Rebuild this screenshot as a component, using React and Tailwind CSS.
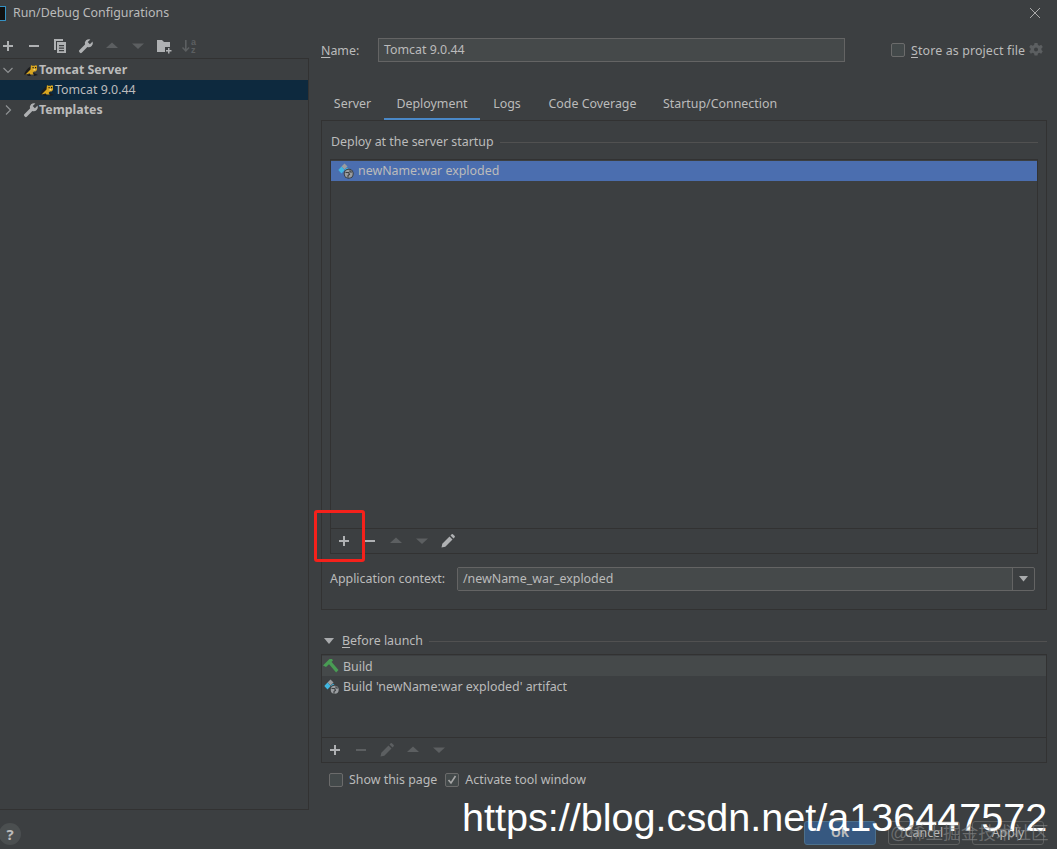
import React from "react";

function Plus({ c = "#afb1b3" }) {
  return (
    <svg width="16" height="16" viewBox="0 0 16 16"><path d="M7 3h2v4h4v2H9v4H7V9H3V7h4z" fill={c} /></svg>
  );
}
function Minus({ c = "#afb1b3" }) {
  return (
    <svg width="16" height="16" viewBox="0 0 16 16"><path d="M3 7h10v2H3z" fill={c} /></svg>
  );
}
function Up({ c = "#5c5f61" }) {
  return (
    <svg width="16" height="16" viewBox="0 0 16 16"><path d="M8 4.500l6 5.500H2z" fill={c} /></svg>
  );
}
function Down({ c = "#5c5f61" }) {
  return (
    <svg width="16" height="16" viewBox="0 0 16 16"><path d="M2 5.500h12L8 11z" fill={c} /></svg>
  );
}
function Pencil({ c = "#afb1b3" }) {
  return (
    <svg width="16" height="16" viewBox="0 0 16 16"><path d="M1.500 14.500l.8-3.800 7.200-7.200 3 3-7.200 7.200zM10.500 2.500l1.200-1.200a.9.9 0 0 1 1.200 0l1.800 1.800a.9.9 0 0 1 0 1.200l-1.200 1.200z" fill={c} /></svg>
  );
}
function Wrench({ c = "#afb1b3" }) {
  return (
    <svg width="16" height="16" viewBox="0 0 16 16"><path d="M14.600 3.600l-2.700 2.700-2.200-2.200L12.400 1.400A4.200 4.200 0 0 0 7 6.600L1.300 12.300a1.200 1.200 0 0 0 0 1.700l.7.7a1.200 1.200 0 0 0 1.700 0L9.400 9a4.200 4.200 0 0 0 5.200-5.400z" fill={c} /></svg>
  );
}
function Copy() {
  return (
    <svg width="16" height="16" viewBox="0 0 16 16">
      <path d="M2 1h9v2H4v9H2z" fill="#afb1b3" />
      <path d="M5 4h9v11H5zM7 7v1.200h5V7zm0 2.600v1.200h5V9.600zm0 2.500v1.200h5v-1.200z" fill="#afb1b3" fillRule="evenodd" />
    </svg>
  );
}
function FolderPlus() {
  return (
    <svg width="16" height="16" viewBox="0 0 16 16">
      <path d="M1 2h5l2 2h6v5H9v5H1z" fill="#afb1b3" />
      <path d="M12 10h1.500v2H15.500v1.500h-2V15.500H12v-2h-2V12h2z" fill="#afb1b3" />
    </svg>
  );
}
function SortAz() {
  return (
    <svg width="16" height="18" viewBox="0 0 16 18">
      <path d="M3 3h1.600v9l2-2 1 1L3.800 15 0 11l1-1 2 2z" fill="#5c5f61" />
      <text x="9" y="7.500" fontSize="9" fontWeight="700" fontFamily="Liberation Sans, sans-serif" fill="#5c5f61">a</text>
      <text x="9" y="16" fontSize="9" fontWeight="700" fontFamily="Liberation Sans, sans-serif" fill="#5c5f61">z</text>
    </svg>
  );
}
function Tomcat() {
  return (
    <svg width="14" height="12" viewBox="0 0 14 12">
      <path d="M0 10.500C1 7.500 3.500 4 6.500 2.500l.5 3.500-3 4.500z" fill="#1c1d1e" />
      <path d="M7 1l1 .8h3l1-.8 1 1V6l-1.500 1.500H10L8.500 9l2.500 1.500H6.500L5.500 9.500 1.500 10.500 4.500 7.500 6.500 5.500z" fill="#d9a61f" />
      <path d="M8.500 3h1.200v1.200H8.500zM11 3h1.200v1.200H11z" fill="#1c1d1e" />
      <path d="M9 8.500l5 2.500-4 1zM3 12l2.500-2.500L7 12z" fill="#1c1d1e" />
      <path d="M9.500 5.200h1.800v1.100H9.500z" fill="#f3e3a8" />
    </svg>
  );
}
function Artifact() {
  return (
    <svg width="16" height="16" viewBox="0 0 16 16">
      <path d="M6.500 0.500l3 3-3 3-3-3z" fill="#9a9da0" />
      <path d="M3.500 3.500l3.200 3.500-3.200 3.500L0.300 7z" fill="#40b6e0" />
      <path d="M9 4.500l2.500 2.500L9 9 6.800 7z" fill="#40b6e0" />
      <circle cx="10.700" cy="10.800" r="5" fill="#3c3f41" />
      <circle cx="10.700" cy="10.800" r="4" fill="#9a9da0" />
      <path d="M7.500 9.500h3l1 1.800-1.500 1.200v2.300M12 7.300v1.700h2" fill="none" stroke="#3c3f41" strokeWidth="1.100" />
    </svg>
  );
}
function Hammer() {
  return (
    <svg width="16" height="16" viewBox="0 0 16 16">
      <path d="M0 7.500L6.500 1H9L10 2.500 3 9z" fill="#499c54" />
      <path d="M5.500 5.500L7.800 3l7.700 9-2.400 2.500z" fill="#499c54" />
    </svg>
  );
}
function Gear() {
  return (
    <svg width="16" height="16" viewBox="0 0 16 16">
      <path d="M6.500 1h3l.4 2 1.500.7 1.800-1 1.600 2.400-1.400 1.300v1.600l1.400 1.300-1.600 2.400-1.800-1-1.500.7-.4 2h-3l-.4-2-1.500-.7-1.800 1L1.200 9.300l1.400-1.300V6.400L1.200 5.100l1.600-2.400 1.800 1 1.500-.7zM8 5.500a2 2 0 1 0 0 4 2 2 0 0 0 0-4z" fill="#5c5f61" fillRule="evenodd" />
    </svg>
  );
}
function CheckBox({ checked }) {
  return (
    <span className="flex h-[14px] w-[14px] items-center justify-center rounded-[2px] border border-[#6b6b6b] bg-[#43494a]">
      {checked && (
        <svg width="12" height="12" viewBox="0 0 12 12"><path d="M2.500 6l2.500 3 4.500-7" fill="none" stroke="#a7a7a7" strokeWidth="1.600" /></svg>
      )}
    </span>
  );
}
function ToolBtn({ children, w = "w-[26px]" }) {
  return <span className={`flex h-full ${w} shrink-0 items-center justify-center`}>{children}</span>;
}
function TreeRow({ selected, indent, chevron, icon, bold, children }) {
  return (
    <div className={`flex h-[20px] items-center ${selected ? "bg-[#0d293e]" : ""}`}>
      <span className={`flex ${indent} shrink-0 justify-start pl-[3px]`}>{chevron}</span>
      <span className="flex w-[17px] shrink-0 justify-center">{icon}</span>
      <span className={bold ? "font-bold" : ""}>{children}</span>
    </div>
  );
}
function ChexLabel({ checked, label }) {
  return (
    <span className="flex items-center">
      <CheckBox checked={checked} />
      <span className="ml-[6px]">{label}</span>
    </span>
  );
}

export default function App() {
  return (
    <div className="relative flex h-[849px] w-[1057px] flex-col overflow-hidden bg-[#3c3f41] font-['Noto_Sans','Open_Sans',sans-serif] text-[12.400px] leading-[20px] text-[#bbbbbb]">
      <div className="flex h-[26px] shrink-0 items-center">
        <span className="mr-[7px] block h-[15px] w-[6px] rounded-r-[1px] border-y border-r border-[#3592c4] bg-[#111111]" />
        <span>Run/Debug Configurations</span>
        <svg className="ml-auto mr-[16px]" width="12" height="12" viewBox="0 0 12 12"><path d="M1 1l10 10M11 1L1 11" stroke="#a9a9a9" strokeWidth="1" /></svg>
      </div>

      <div className="flex min-h-0 flex-1">
        <div className="flex w-[309px] shrink-0 flex-col">
          <div className="flex h-[32px] shrink-0 items-center pt-[8px]">
            <ToolBtn w="w-[21px]"><span className="-ml-[5px] flex"><Plus /></span></ToolBtn>
            <ToolBtn><Minus /></ToolBtn>
            <ToolBtn><Copy /></ToolBtn>
            <ToolBtn><Wrench /></ToolBtn>
            <ToolBtn><Up /></ToolBtn>
            <ToolBtn><Down /></ToolBtn>
            <ToolBtn><FolderPlus /></ToolBtn>
            <ToolBtn><SortAz /></ToolBtn>
          </div>
          <div className="h-[751px] shrink-0 border-t border-r border-[#323232] pt-[1px]">
            <TreeRow indent="w-[22px]" icon={<Tomcat />} bold chevron={
              <svg width="10" height="10" viewBox="0 0 10 10"><path d="M.500 3l4.500 4.500L9.500 3" fill="none" stroke="#8f9294" strokeWidth="1.200" /></svg>
            }>Tomcat Server</TreeRow>
            <TreeRow selected indent="w-[38px]" icon={<Tomcat />}>Tomcat 9.0.44</TreeRow>
            <TreeRow indent="w-[22px]" icon={<Wrench />} bold chevron={
              <svg width="10" height="10" viewBox="0 0 10 10"><path d="M3 .500L7.500 5 3 9.500" fill="none" stroke="#8f9294" strokeWidth="1.200" /></svg>
            }>Templates</TreeRow>
          </div>
          <div className="flex flex-1 items-start border-t border-[#323232] pt-[13px]">
            <span className="-ml-[1px] flex h-[22px] w-[22px] items-center justify-center rounded-full bg-[#4b4f50] text-[15px] font-bold">?</span>
          </div>
        </div>

        <div className="flex min-w-0 flex-1 flex-col pl-[12px] pr-[10px] pt-[12px]">
          <div className="flex h-[24px] shrink-0 items-center">
            <span className="w-[57px] shrink-0 pt-[1px]"><span className="underline underline-offset-2">N</span>ame:</span>
            <div className="flex h-[24px] w-[467px] shrink-0 items-center border border-[#646464] bg-[#45494a] px-[5px]">Tomcat 9.0.44</div>
            <span className="ml-[46px] mr-[6px] flex"><CheckBox /></span>
            <span className="pt-[1px] tracking-[0.130px]"><span className="underline underline-offset-2">S</span>tore as project file</span>
            <span className="ml-[3px] flex"><Gear /></span>
          </div>

          <div className="mt-[33px] flex h-[26px] shrink-0 items-start">
            {[
              ["Server", "w-[63px]", false],
              ["Deployment", "w-[96px]", true],
              ["Logs", "w-[54px]", false],
              ["Code Coverage", "w-[117px]", false],
              ["Startup/Connection", "w-[138px]", false],
            ].map(([t, w, a]) => (
              <div key={t} className={`flex h-[26px] ${w} shrink-0 justify-center leading-[18px] ${a ? "border-b-[3px] border-[#4a88c7]" : ""}`}>{t}</div>
            ))}
          </div>

          <div className="-mt-[1px] flex h-[490px] shrink-0 flex-col border border-[#323232] px-[8px] pt-[11px]">
            <div className="flex h-[20px] shrink-0 items-center pl-[1px]">
              <span>Deploy at the server startup</span>
              <span className="ml-[6px] h-px flex-1 bg-[#515151]" />
            </div>
            <div className="mt-[7px] flex h-[395px] shrink-0 flex-col border border-[#323232] pt-[1px]">
              <div className="flex h-[20px] shrink-0 items-center bg-[#4b6eaf] pl-[7px]">
                <Artifact />
                <span className="ml-[4px]">newName:war exploded</span>
              </div>
              <div className="flex-1" />
              <div className="flex h-[25px] shrink-0 items-center border-t border-[#323232]">
                <ToolBtn><Plus /></ToolBtn>
                <ToolBtn><Minus /></ToolBtn>
                <ToolBtn><Up /></ToolBtn>
                <ToolBtn><Down /></ToolBtn>
                <ToolBtn><Pencil /></ToolBtn>
              </div>
            </div>
            <div className="mt-[13px] flex h-[24px] shrink-0 items-center">
              <span className="w-[127px] shrink-0">Application context:</span>
              <div className="flex h-[24px] w-[578px] shrink-0 items-center rounded-[2px] border border-[#646464]">
                <div className="flex h-full flex-1 items-center bg-[#45494a] pl-[5px]">/newName_war_exploded</div>
                <div className="flex h-full w-[22px] shrink-0 items-center justify-center border-l border-[#646464]">
                  <svg width="10" height="6" viewBox="0 0 10 6"><path d="M0 0h9L4.500 5.500z" fill="#a9abad" /></svg>
                </div>
              </div>
            </div>
          </div>

          <div className="mt-[21px] flex h-[20px] shrink-0 items-center">
            <svg className="ml-[3px]" width="10" height="6" viewBox="0 0 10 6"><path d="M0 0h10L5 6z" fill="#a9abad" /></svg>
            <span className="ml-[8px]"><span className="underline underline-offset-2">B</span>efore launch</span>
            <span className="ml-[6px] h-px flex-1 bg-[#515151]" />
          </div>

          <div className="mt-[3px] flex h-[109px] shrink-0 flex-col border border-[#323232] pt-[1px]">
            <div className="flex h-[20px] shrink-0 items-center bg-[#45494a] pl-[1px]">
              <Hammer />
              <span className="ml-[4px] pt-[1px]">Build</span>
            </div>
            <div className="flex h-[21px] shrink-0 items-center pl-[2px]">
              <Artifact />
              <span className="ml-[3px]">Build 'newName:war exploded' artifact</span>
            </div>
            <div className="flex-1" />
            <div className="flex h-[25px] shrink-0 items-center border-t border-[#323232]">
              <ToolBtn><Plus /></ToolBtn>
              <ToolBtn><Minus c="#5c5f61" /></ToolBtn>
              <ToolBtn><Pencil c="#5c5f61" /></ToolBtn>
              <ToolBtn><Up /></ToolBtn>
              <ToolBtn><Down /></ToolBtn>
            </div>
          </div>

          <div className="mt-[7px] flex h-[20px] shrink-0 items-center pl-[8px]">
            <ChexLabel label="Show this page" />
            <span className="ml-[8px]" />
            <ChexLabel checked label="Activate tool window" />
          </div>

          <div className="mt-[31px] flex h-[24px] shrink-0 justify-end gap-[12px] pr-[3px]">
            <span className="flex w-[72px] items-center justify-center rounded-[3px] border border-[#4c708c] bg-[#365880] font-bold">OK</span>
            <span className="flex w-[72px] items-center justify-center rounded-[3px] border border-[#5e6060] bg-[#3c3f41]">Cancel</span>
            <span className="flex w-[72px] items-center justify-center rounded-[3px] border border-[#5e6060] bg-[#3c3f41]">Apply</span>
          </div>
        </div>
      </div>

      <div className="absolute left-[314px] top-[510px] h-[52px] w-[51px] rounded-[3px] border-[3px] border-[#f5211b]" />
      <div className="absolute left-[462px] top-[792px] whitespace-nowrap font-['Liberation_Sans',sans-serif] text-[39.600px] leading-[50px] text-white">https://blog.csdn.net/a136447572</div>
      <div className="absolute left-[890px] top-[823px] whitespace-nowrap font-['Liberation_Sans','Noto_Sans_CJK_SC',sans-serif] text-[17.600px] leading-[20px] text-[#8a8c8d]/60">@稀土掘金技术社区</div>
    </div>
  );
}
